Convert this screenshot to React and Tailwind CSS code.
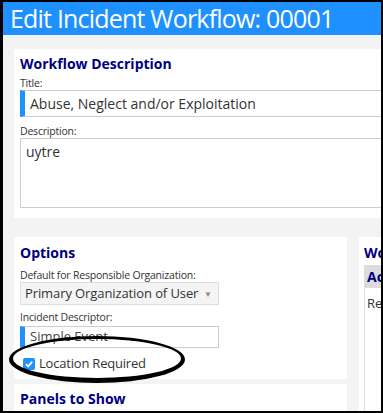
import React from "react";

const font = { fontFamily: '"Open Sans", "Noto Sans", sans-serif' };

function Label({ children }) {
  return (
    <div className="text-[10.5px] leading-[12px] tracking-[-0.2px] text-[#333] whitespace-nowrap">
      {children}
    </div>
  );
}

function Heading({ children }) {
  return (
    <div className="text-[14px] leading-[18px] font-bold text-[#000080] whitespace-nowrap">
      {children}
    </div>
  );
}

export default function App() {
  return (
    <div
      className="w-[383px] h-[413px] bg-black pt-[2px] pl-[3px] pr-[2px] pb-[2px] overflow-hidden"
      style={font}
    >
      <div className="relative h-full w-full bg-[#f3f3f3] overflow-hidden flex flex-col">
        <div className="h-[33px] shrink-0 bg-[#1e90ff] pl-[7px] flex items-center">
          <span className="text-white text-[25px] leading-none tracking-[-0.8px] whitespace-nowrap">
            Edit Incident Workflow: 00001
          </span>
        </div>

        <div className="pl-[11px] pt-[14px] flex flex-col">
          {/* Workflow Description panel */}
          <div className="bg-white w-[400px] h-[169px] pl-[6px] pt-[6px] flex flex-col">
            <Heading>Workflow Description</Heading>
            <div className="mt-[4px]">
              <Label>Title:</Label>
            </div>
            <div className="mt-[1px] h-[27px] border border-[#cccccc] border-l-[5px] border-l-[#1e90ff] flex items-center pl-[5px]">
              <span className="text-[14px] text-[#333] whitespace-nowrap">
                Abuse, Neglect and/or Exploitation
              </span>
            </div>
            <div className="mt-[8px]">
              <Label>Description:</Label>
            </div>
            <div className="mt-[1px] h-[70px] border border-[#cccccc] pl-[5px]">
              <span className="text-[14px] leading-[16px] text-[#333]">uytre</span>
            </div>
          </div>

          <div className="mt-[19px] flex gap-[12px]">
            <div className="flex flex-col gap-[5px] shrink-0">
              {/* Options panel */}
              <div className="bg-white w-[333px] h-[142px] pl-[6px] pt-[7px] flex flex-col">
                <Heading>Options</Heading>
                <div className="mt-[7px]">
                  <Label>Default for Responsible Organization:</Label>
                </div>
                <div className="mt-[1px] w-[199px] h-[23px] bg-[#f4f4f4] border border-[#dddddd] flex items-center justify-between pl-[4px] pr-[6px]">
                  <span className="text-[13px] tracking-[-0.1px] text-[#333] whitespace-nowrap">
                    Primary Organization of User
                  </span>
                  <span className="text-[#8a8a8a] text-[8px] leading-none">▼</span>
                </div>
                <div className="mt-[6px]">
                  <Label>Incident Descriptor:</Label>
                </div>
                <div className="mt-[3px] w-[199px] h-[22px] border border-[#cccccc] border-l-[5px] border-l-[#1e90ff] flex items-center pl-[5px]">
                  <span className="text-[13px] text-[#444] whitespace-nowrap">Simple Event</span>
                </div>
                <label className="mt-[8px] h-[16px] flex items-center gap-[4px] pl-[3px]">
                  <span className="w-[12px] h-[12px] rounded-[2px] bg-[#1e90ff] flex items-center justify-center">
                    <svg width="10" height="10" viewBox="0 0 10 10">
                      <path d="M2 5.2 L4.2 7.4 L8.2 2.6" fill="none" stroke="white" strokeWidth="1.8" />
                    </svg>
                  </span>
                  <span className="text-[13px] tracking-[-0.2px] text-[#333] whitespace-nowrap">
                    Location Required
                  </span>
                </label>
              </div>
              {/* Panels to Show */}
              <div className="bg-white w-[333px] h-[40px] pl-[6px] pt-[6px]">
                <Heading>Panels to Show</Heading>
              </div>
            </div>

            {/* Right panel (cut off by the window edge) */}
            <div className="bg-white w-[60px] h-[200px] pl-[5px] pt-[7px] flex flex-col shrink-0">
              <Heading>Workflow Actions</Heading>
              <div className="mt-[3px] border-l border-[#dddddd] flex flex-col h-[150px]">
                <div className="h-[23px] bg-[#dcdcdc] pl-[2px] flex items-center">
                  <span className="text-[14px] font-bold text-[#000080] whitespace-nowrap">Action</span>
                </div>
                <div className="pl-[2px] pt-[2px]">
                  <span className="text-[13px] leading-[18px] text-[#333] whitespace-nowrap">Required</span>
                </div>
              </div>
            </div>
          </div>
        </div>

        {/* hand-drawn highlight ellipse */}
        <svg
          className="absolute pointer-events-none left-0 top-[330px]"
          width="190"
          height="56"
          viewBox="0 0 190 56"
        >
          <path
            fillRule="evenodd"
            fill="black"
            d="M6 27.5 A88 23.5 0 1 0 182 27.5 A88 23.5 0 1 0 6 27.5 Z M10 26.5 A84 19.5 0 1 1 178 26.5 A84 19.5 0 1 1 10 26.5 Z"
          />
        </svg>
      </div>
    </div>
  );
}
